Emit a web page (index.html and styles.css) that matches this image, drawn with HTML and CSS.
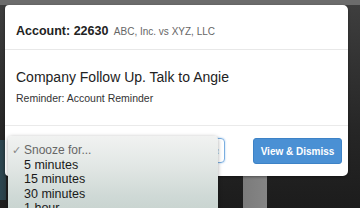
FILE: index.html
```html
<!DOCTYPE html>
<html>
<head>
<meta charset="utf-8">
<link rel="stylesheet" href="styles.css">
</head>
<body>
<div class="screen">
  <div class="modal">
    <div class="modal-header">
      <span class="acct">Account: 22630</span>
      <span class="parties">ABC, Inc. vs XYZ, LLC</span>
    </div>
    <div class="modal-body">
      <div class="title">Company Follow Up. Talk to Angie</div>
      <div class="sub">Reminder: Account Reminder</div>
    </div>
    <div class="modal-footer">
      <div class="select"><span class="arrows">&#8597;</span></div>
      <button class="btn">View &amp; Dismiss</button>
    </div>
  </div>
  <ul class="dropdown">
    <li class="sel"><span class="check">&#10003;</span>Snooze for...</li>
    <li>5 minutes</li>
    <li>15 minutes</li>
    <li>30 minutes</li>
    <li>1 hour</li>
  </ul>
</div>
</body>
</html>
```
FILE: styles.css
```css
* { box-sizing: border-box; }
html, body { margin: 0; padding: 0; }
body {
  width: 360px;
  height: 208px;
  overflow: hidden;
  font-family: "Liberation Sans", Arial, sans-serif;
  background:
    linear-gradient(to right, transparent 243px, #7b7b7b 243px, #858585 267px, transparent 267px) 0 176px / 100% 40px no-repeat,
    linear-gradient(to right, #2c4650 0, #2a3e46 6px, transparent 6px) 0 140px / 100% 60px no-repeat,
    linear-gradient(to bottom, #6c6c6c 0, #6c6c6c 5px, #3e3e3e 5px, #333 60px, #262626 130px, #1c1c1c 208px);
}
.screen {
  position: relative;
  height: 208px;
  padding: 5px 12px 0 5px;
}
.modal {
  background: #fff;
  border-radius: 4px 5px 5px 4px;
  height: 171px;
  display: flex;
  flex-direction: column;
  box-shadow: 0 1px 3px rgba(0,0,0,0.4);
}
.modal-header {
  height: 45px;
  padding: 16px 0 0 11px;
  border-bottom: 1px solid #e8e8e8;
  white-space: nowrap;
}
.acct {
  font-size: 12.5px;
  font-weight: bold;
  color: #222;
}
.parties {
  font-size: 10px;
  color: #666;
  margin-left: 1px;
}
.modal-body {
  height: 76px;
  padding: 19px 0 0 11px;
  border-bottom: 1px solid #eaeaea;
}
.title {
  font-size: 14px;
  color: #222;
  line-height: 17px;
}
.sub {
  font-size: 10.5px;
  color: #333;
  margin-top: 6px;
}
.modal-footer {
  flex: 1;
  display: flex;
  align-items: flex-start;
  justify-content: space-between;
  padding: 12px 6px 0 11px;
}
.select {
  width: 209px;
  height: 25px;
  border: 1px solid #7aaee0;
  border-radius: 4px;
  box-shadow: 0 0 2px #9cc4ec;
  display: flex;
  align-items: center;
  justify-content: flex-end;
  padding-right: 4px;
  font-size: 9px;
  color: #888;
}
.btn {
  width: 89px;
  height: 26px;
  border: 1px solid #3d82c6;
  border-radius: 3px;
  background: #4a90d4;
  color: #fff;
  font-family: "Liberation Sans", Arial, sans-serif;
  font-weight: bold;
  font-size: 10px;
  padding: 0;
}
.dropdown {
  position: absolute;
  left: 8px;
  top: 136px;
  width: 210px;
  height: 80px;
  margin: 0;
  padding: 7px 0 0 0;
  list-style: none;
  border-radius: 4px 4px 0 0;
  background: linear-gradient(to bottom, #f1f2f1 0, #e2e7e5 30px, #cfd9d6 60px, #c6d2ce 80px);
  box-shadow: 0 1px 4px rgba(0,0,0,0.35);
}
.dropdown li {
  font-size: 12.5px;
  line-height: 14.5px;
  color: #1a1a1a;
  padding-left: 16px;
  position: relative;
}
.dropdown li.sel { color: #666; font-size: 12px; }
.check {
  position: absolute;
  left: 4px;
  color: #888;
  font-size: 11px;
}
```
